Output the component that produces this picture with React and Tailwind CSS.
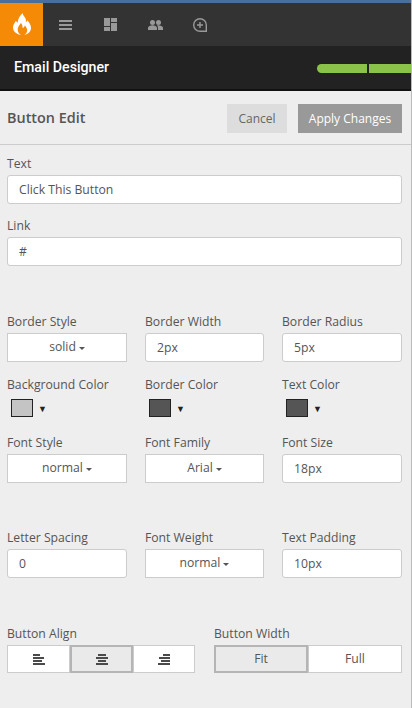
const labelCls = "block text-[12.2px] leading-[20px] text-[#555]";
const inputCls = "block w-full h-[29px] bg-white border border-[#ccc] rounded-[3px] px-[11px] pt-[1px] text-[12.2px] text-[#555] flex items-center";
const rowCls = "grid grid-cols-[120px_119px_120px] gap-x-[18px]";

function Field({ label, value }) {
  return (
    <div>
      <div className={labelCls}>{label}</div>
      <div className={"mt-[1px] " + inputCls}>{value}</div>
    </div>
  );
}

function Select({ label, value }) {
  return (
    <div>
      <div className={labelCls}>{label}</div>
      <div className="mt-[1px] h-[29px] bg-white border border-[#ccc] flex items-center justify-center text-[12.2px] text-[#555]">
        {value}
        <span className="ml-[3px] mt-[1px] w-0 h-0 border-x-[3px] border-x-transparent border-t-[3px] border-t-[#555]" />
      </div>
    </div>
  );
}

function Swatch({ label, color }) {
  return (
    <div>
      <div className={labelCls}>{label}</div>
      <div className="mt-[4px] ml-[4px] flex items-center h-[18px]">
        <div className={"w-[22px] h-[18px] border border-[#222] " + color} />
        <span className="ml-[5px] text-[9px] leading-none text-[#222]">▼</span>
      </div>
    </div>
  );
}

function AlignIcon({ lines }) {
  return (
    <svg width="12" height="11" viewBox="0 0 12 11" fill="#4a4a4a">
      {lines.map((l, i) => (
        <rect key={i} x={l[0]} y={i * 3} width={l[1]} height="2" />
      ))}
    </svg>
  );
}

export default function App() {
  return (
    <div className="w-[412px] h-[708px] overflow-hidden bg-[#eee] border-r border-[#bbb] font-['Open_Sans',sans-serif]">
      <div className="h-[3px] bg-[#4a6f9f]" />
      <nav className="h-[43px] bg-[#333] flex items-center">
        <div className="w-[43px] h-[43px] bg-[#f58a07] flex items-center justify-center">
          <svg className="mb-[2px]" width="18" height="22" viewBox="0 0 18 22" fill="#fff">
            <path d="M9.500 0c.5 3 3.500 4.500 3.500 7.500 0 .8-.2 1.300-.4 1.800.8-.3 1.400-1 1.600-2 2.200 2.300 3.800 4.800 3.800 7.700 0 3.500-3 6.200-6.500 7 2-1.500 3-3.300 2.600-5.500-.4-1.800-1.300-3-2.300-4-.4 1.400-1.200 2.200-2.300 2.600.3-2-.5-3.800-1.500-5-1.500 2-3.300 4-3.300 6.500 0 2.300 1.300 4.300 3.200 5.400C3.500 21.300 0 18.500 0 14.500c0-2.800 1.800-4.700 3-6.700.4 1 1 1.600 1.700 2C4.800 6 6.800 3 9.500 0z" />
          </svg>
        </div>
        <svg className="ml-[16px]" width="13" height="10" viewBox="0 0 13 10" fill="#999">
          <rect y="0" width="13" height="2" />
          <rect y="4" width="13" height="2" />
          <rect y="8" width="13" height="2" />
        </svg>
        <svg className="ml-[32px]" width="13" height="13" viewBox="0 0 13 13" fill="#999">
          <rect width="6" height="8" />
          <rect y="9" width="6" height="4" />
          <rect x="7" width="6" height="4" />
          <rect x="7" y="5" width="6" height="8" />
        </svg>
        <svg className="ml-[31px]" width="15" height="10" viewBox="0 0 15 10" fill="#999">
          <circle cx="4.500" cy="2.500" r="2.500" />
          <circle cx="10.500" cy="2.500" r="2.500" />
          <path d="M0 10V8c0-1.700 2.700-2.700 4.500-2.700S9 6.300 9 8v2zM10 5.300c2 0 5 1 5 2.700v2h-5V8c0-1-.4-1.800-1-2.400.3-.2.600-.3 1-.3z" />
        </svg>
        <svg className="ml-[30px]" width="14" height="14" viewBox="0 0 14 14" fill="none" stroke="#999" strokeWidth="1.400">
          <path d="M7 .7a6.300 6.300 0 1 0 0 12.600h6.300V7A6.300 6.300 0 0 0 7 .7z" />
          <path d="M7 4v6M4 7h6" />
        </svg>
      </nav>
      <header className="h-[45px] bg-[#222] border-b-2 border-[#111] flex items-center justify-between pl-[14px]">
        <span className="text-[14.200px] font-medium text-white font-['Roboto',sans-serif]">Email Designer</span>
        <div className="flex gap-[2px] mt-[1px]">
          <div className="w-[50px] h-[9px] bg-[#8bc34a] rounded-l-full" />
          <div className="w-[42px] h-[9px] bg-[#8bc34a]" />
        </div>
      </header>

      <div className="h-[54px] border-b border-[#ccc] flex items-center justify-between pl-[7px] pr-[9px]">
        <h2 className="mt-[1px] text-[14.400px] font-semibold text-[#555]">Button Edit</h2>
        <div className="flex gap-[11px] mt-[2px]">
          <button className="w-[60px] h-[29px] pt-[1px] bg-[#ddd] text-[12px] text-[#666]">Cancel</button>
          <button className="w-[104px] h-[29px] pt-[1px] bg-[#999] text-[12px] text-white">Apply Changes</button>
        </div>
      </div>

      <div className="pl-[7px] pr-[9px]">
        <div className="pt-[9px]">
          <Field label="Text" value="Click This Button" />
        </div>
        <div className="mt-[12px]">
          <Field label="Link" value="#" />
        </div>

        <div className={"mt-[46px] " + rowCls}>
          <Select label="Border Style" value="solid" />
          <Field label="Border Width" value="2px" />
          <Field label="Border Radius" value="5px" />
        </div>
        <div className={"mt-[13px] " + rowCls}>
          <Swatch label="Background Color" color="bg-[#c4c4c4]" />
          <Swatch label="Border Color" color="bg-[#555]" />
          <Swatch label="Text Color" color="bg-[#555]" />
        </div>
        <div className={"mt-[16px] " + rowCls}>
          <Select label="Font Style" value="normal" />
          <Select label="Font Family" value="Arial" />
          <Field label="Font Size" value="18px" />
        </div>
        <div className={"mt-[45px] " + rowCls}>
          <Field label="Letter Spacing" value="0" />
          <Select label="Font Weight" value="normal" />
          <Field label="Text Padding" value="10px" />
        </div>

        <div className="mt-[46px] flex gap-[19px]">
          <div className="w-[188px]">
            <div className={labelCls}>Button Align</div>
            <div className="mt-[1px] flex h-[28px]">
              <div className="w-[63px] bg-white border border-[#ccc] flex items-center justify-center">
                <AlignIcon lines={[[0, 7], [0, 11], [0, 9], [0, 12]]} />
              </div>
              <div className="w-[63px] bg-[#eaeaea] border-2 border-[#b5b5b5] flex items-center justify-center">
                <AlignIcon lines={[[2, 8], [0, 12], [2, 8], [0, 12]]} />
              </div>
              <div className="w-[62px] bg-white border border-[#ccc] flex items-center justify-center">
                <AlignIcon lines={[[5, 7], [1, 11], [3, 9], [0, 12]]} />
              </div>
            </div>
          </div>
          <div className="w-[188px]">
            <div className={labelCls}>Button Width</div>
            <div className="mt-[1px] flex h-[28px] text-[12.200px] text-[#555]">
              <div className="w-[94px] bg-[#eaeaea] border-2 border-[#b5b5b5] flex items-center justify-center">Fit</div>
              <div className="w-[94px] bg-white border border-[#ccc] flex items-center justify-center">Full</div>
            </div>
          </div>
        </div>
      </div>
    </div>
  );
}
